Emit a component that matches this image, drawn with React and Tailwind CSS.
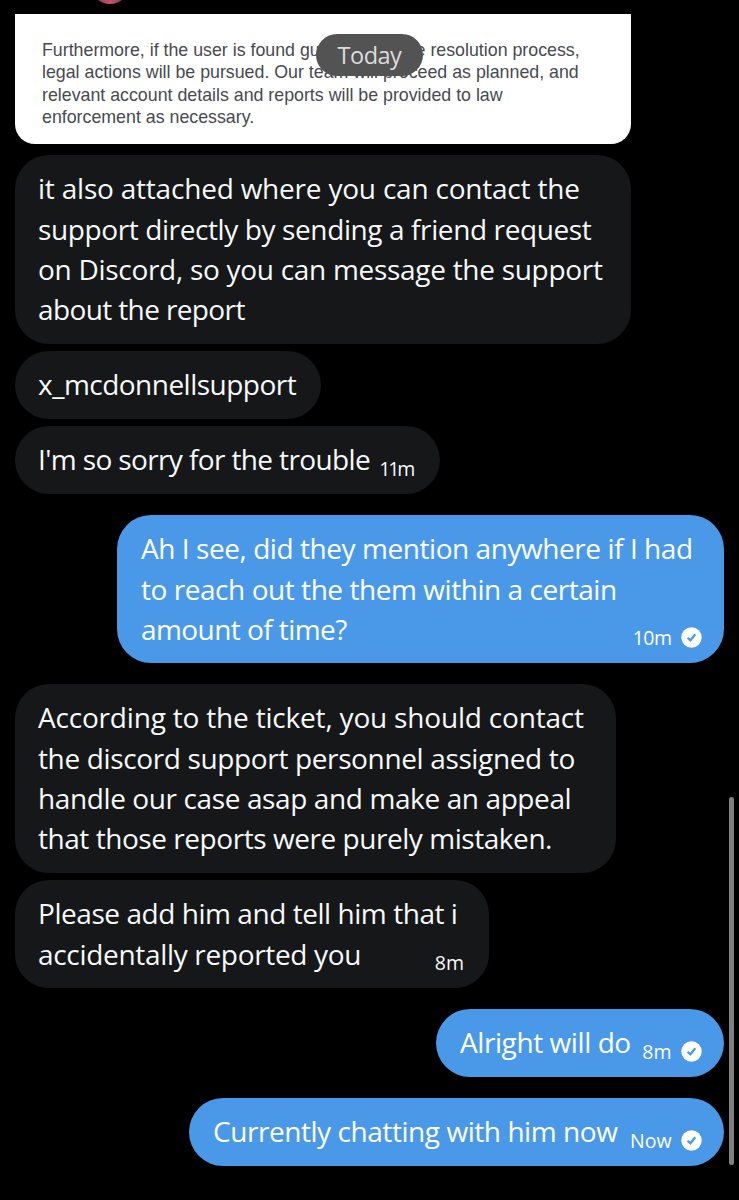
import React from 'react'
import clsx from 'clsx'

// Delivered badge: white disc with a check in the bubble colour
function SeenBadge() {
  return (
    <svg className="w-[21px] h-[21px] flex-shrink-0" viewBox="0 0 21 21" fill="none">
      <circle cx="10.5" cy="10.5" r="10.2" fill="#ffffff" />
      <path d="M6.6 10.7 L9.4 13.3 L14.3 7.2" stroke="#4a99e9" strokeWidth="2.2" />
    </svg>
  )
}

// Each line carries its own tracking so that it ends where it should
const messages = [
  {
    box: 'w-[616px] h-[189px]',
    lines: [
      ['it also attached where you can contact the', 'tracking-[-0.21px]'],
      ['support directly by sending a friend request', 'tracking-[-0.39px]'],
      ['on Discord, so you can message the support', 'tracking-[-0.29px]'],
      ['about the report', 'tracking-[-0.62px]'],
    ],
  },
  { box: 'w-[306px] h-[68px] mt-[7px]', lines: [['x_mcdonnellsupport', 'tracking-[-0.52px]']] },
  {
    box: 'w-[425px] h-[68px] mt-[7px]',
    lines: [["I'm so sorry for the trouble", 'tracking-[-0.62px]']],
    time: '11m',
    timeTracking: 'tracking-[-2.2px] mr-[2px]',
  },
  {
    mine: true,
    box: 'w-[607px] h-[148px] mt-[21px]',
    lines: [
      ['Ah I see, did they mention anywhere if I had', 'tracking-[-0.44px]'],
      ['to reach out the them within a certain', 'tracking-[-0.45px]'],
      ['amount of time?', 'tracking-[-0.57px]'],
    ],
    time: '10m',
    timeTracking: 'tracking-[-0.5px]',
  },
  {
    box: 'w-[601px] h-[189px] mt-[21px]',
    lines: [
      ['According to the ticket, you should contact', 'tracking-[-0.19px]'],
      ['the discord support personnel assigned to', 'tracking-[-0.36px]'],
      ['handle our case asap and make an appeal', 'tracking-[-0.39px]'],
      ['that those reports were purely mistaken.', 'tracking-[-0.45px]'],
    ],
  },
  {
    box: 'w-[474px] h-[108px] mt-[7px]',
    lines: [
      ['Please add him and tell him that i', 'tracking-[-0.45px]'],
      ['accidentally reported you', 'tracking-[-0.32px]'],
    ],
    time: '8m',
  },
  {
    mine: true,
    box: 'w-[288px] h-[68px] mt-[21px]',
    lines: [['Alright will do', 'tracking-[-0.42px]']],
    time: '8m',
  },
  {
    mine: true,
    box: 'w-[535px] h-[68px] mt-[21px]',
    lines: [['Currently chatting with him now', 'tracking-[-0.44px]']],
    time: 'Now',
  },
]

function Bubble({ box, lines, time, timeTracking, mine }) {
  return (
    <div
      className={clsx(
        'flex items-end rounded-[34px] pt-[13.2px]',
        mine ? 'self-end bg-[#4a99e9] text-white pl-[24px] pr-[22px]' : 'bg-[#151719] text-[#f7f9f9] pl-[23px] pr-[25px]',
        box
      )}
    >
      {/* zero basis: long lines may run above the timestamp */}
      <div className="self-start flex-1 w-0 text-[28px] leading-[40.4px] whitespace-nowrap">
        {lines.map(([text, tracking]) => (
          <p key={text} className={tracking}>{text}</p>
        ))}
      </div>
      {time && (
        <div className="flex items-center gap-[9.5px] mb-[15px] text-[19.5px] leading-[21px]">
          <span className={timeTracking}>{time}</span>
          {mine && <SeenBadge />}
        </div>
      )}
    </div>
  )
}

export default function App() {
  return (
    <div className="relative w-[739px] h-[1200px] overflow-hidden bg-black font-['Open_Sans',sans-serif]">
      {/* ── Header remainder: bottom edge of the avatar ── */}
      <div className="h-[14px] pl-[90px] overflow-hidden">
        <div className="w-10 h-10 -mt-[36px] rounded-full bg-linear-to-r from-[#7a2a3c] via-[#c0566a] to-[#7a2a3c]" />
      </div>

      {/* ── Conversation ── */}
      <div className="flex flex-col items-start px-[15px]">
        <div className="w-[616px] h-[130px] mb-[11px] pt-[25.4px] pl-[27px] rounded-b-[20px] bg-white text-[#484a4f] text-[17.8px] leading-[22.1px] whitespace-nowrap font-['Liberation_Sans',sans-serif]">
          <p>Furthermore, if the user is found guilty during the resolution process,</p>
          <p>legal actions will be pursued. Our team will proceed as planned, and</p>
          <p>relevant account details and reports will be provided to law</p>
          <p>enforcement as necessary.</p>
        </div>
        {messages.map((m) => (
          <Bubble key={m.lines[0][0]} {...m} />
        ))}
      </div>

      {/* ── Floating date pill ── */}
      <div className="absolute left-[316px] top-[34px] w-[107px] h-[42px] rounded-full bg-[#535353] text-[#dcdcdc] text-[23.5px] tracking-[-0.5px] leading-[42px] text-center">
        Today
      </div>

      {/* ── Scroll thumb ── */}
      <div className="absolute left-[729px] top-[797px] w-[5px] h-[368px] rounded-full bg-[#808080]" />
    </div>
  )
}
